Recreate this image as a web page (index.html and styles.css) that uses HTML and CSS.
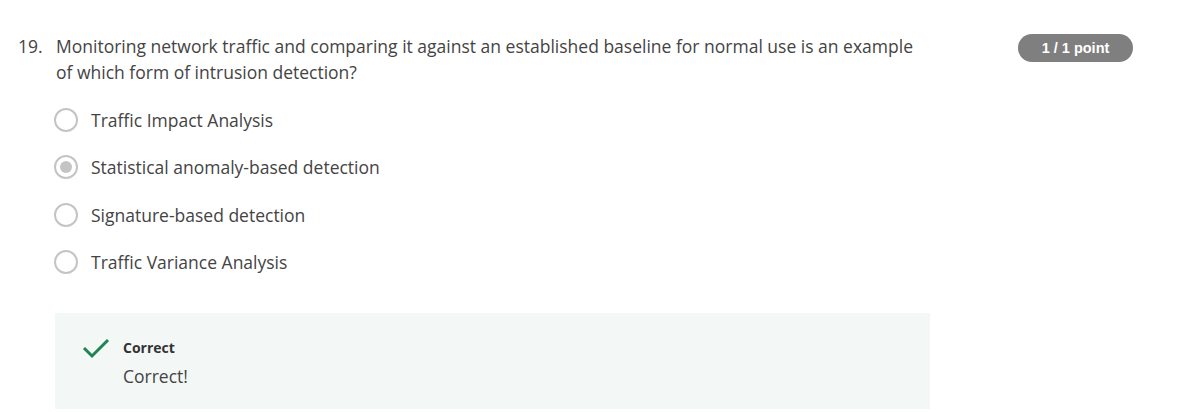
FILE: index.html
```html
<!DOCTYPE html>
<html>
<head>
<meta charset="utf-8">
<link rel="stylesheet" href="styles.css">
</head>
<body>
<div class="question">
  <div class="q-main">
    <div class="q-head">
      <span class="q-num">19.</span>
      <p class="q-text">Monitoring network traffic and comparing it against an established baseline for normal use is an example of which form of intrusion detection?</p>
    </div>
    <ul class="options">
      <li class="option"><span class="radio"></span><span>Traffic Impact Analysis</span></li>
      <li class="option"><span class="radio checked"></span><span>Statistical anomaly-based detection</span></li>
      <li class="option"><span class="radio"></span><span>Signature-based detection</span></li>
      <li class="option"><span class="radio"></span><span>Traffic Variance Analysis</span></li>
    </ul>
    <div class="feedback">
      <svg class="check" width="28" height="22" viewBox="0 0 28 22"><path d="M2 11 L10 19 L26 3" fill="none" stroke="#1f8354" stroke-width="3"/></svg>
      <div class="fb-body">
        <div class="fb-title">Correct</div>
        <div class="fb-text">Correct!</div>
      </div>
    </div>
  </div>
  <div class="badge">1 / 1 point</div>
</div>
</body>
</html>
```
FILE: styles.css
```css
html, body { margin: 0; padding: 0; background: #fff; }
body { font-family: "Open Sans", sans-serif; color: #444; }
.question { display: flex; padding: 33px 0 0 18px; }
.q-main { width: 912px; }
.q-head { display: flex; font-size: 17.5px; line-height: 26px; }
.q-num { width: 38px; flex: none; }
.q-text { margin: 0; width: 860px; }
.options { list-style: none; margin: 11px 0 0 36px; padding: 0; }
.option { display: flex; align-items: center; height: 47.5px; font-size: 17.5px; }
.radio { width: 20px; height: 20px; border: 2px solid #c4c4c4; border-radius: 50%; margin-right: 13px; position: relative; box-sizing: content-box; }
.radio.checked::after { content: ""; position: absolute; left: 4px; top: 4px; width: 12px; height: 12px; border-radius: 50%; background: #c4c4c4; }
.feedback { margin: 27px 0 0 37px; width: 875px; height: 96px; background: #f3f8f6; display: flex; box-sizing: border-box; padding: 24px 0 0 27px; }
.check { margin-top: 0; margin-right: 13px; }
.fb-title { font-size: 14px; font-weight: 700; line-height: 22px; color: #333; }
.fb-text { font-size: 17.5px; line-height: 24px; margin-top: 5px; }
.badge { margin-left: 88px; margin-top: 1px; width: 115px; height: 28px; border-radius: 14px; background: #7f7f7f; color: #fff; font-family: "Liberation Sans", Arial, sans-serif; font-weight: 700; font-size: 14.5px; display: flex; align-items: center; justify-content: center; }
```
